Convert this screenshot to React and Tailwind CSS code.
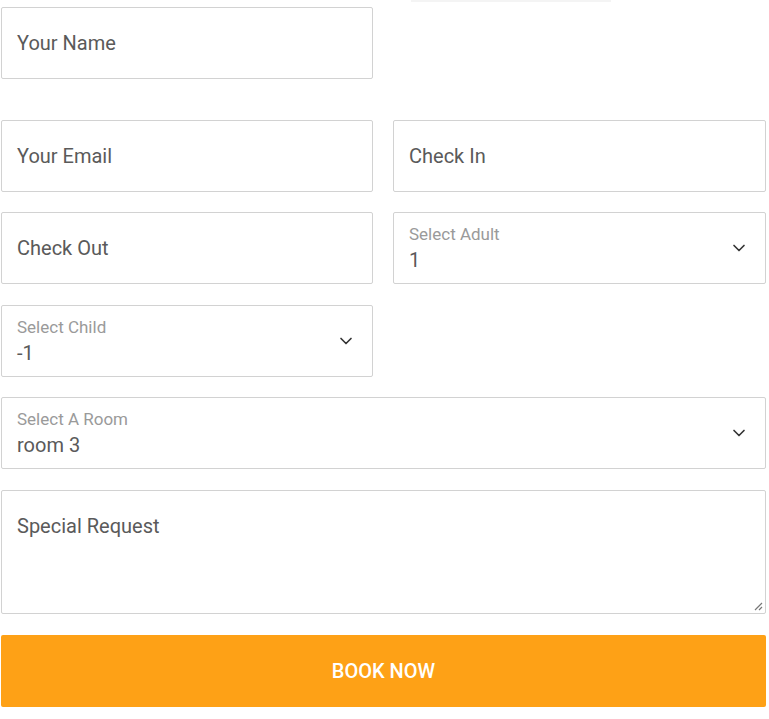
import { ChevronDown } from 'lucide-react';

const font = { fontFamily: 'Roboto, "Liberation Sans", sans-serif' };

const Field = ({ label, className = '' }) => (
  <div className={`h-[72px] border border-[#d2d2d2] rounded-[2px] bg-white flex items-center px-[15px] ${className}`}>
    <span className="text-[20px] text-[#5a5a5a]">{label}</span>
  </div>
);

const SelectField = ({ label, value, className = '' }) => (
  <div className={`h-[72px] border border-[#d2d2d2] rounded-[2px] bg-white flex items-center pl-[15px] pr-4 ${className}`}>
    <div className="flex-1 flex flex-col pt-1">
      <span className="text-[17px] leading-5 text-[#9a9a9a]">{label}</span>
      <span className="text-[20px] leading-8 text-[#5a5a5a]">{value}</span>
    </div>
    <ChevronDown size={20} strokeWidth={2} className="text-[#333]" />
  </div>
);

const Row = ({ className = '', children }) => (
  <div className={`grid grid-cols-[372px_373px] gap-x-5 ${className}`}>{children}</div>
);

const App = () => {
  return (
    <div className="min-h-screen bg-white" style={font}>
      <div className="w-[766px] pl-px">
        <div className="h-[7px] relative">
          <div className="absolute left-[410px] top-0 w-[200px] h-[2px] bg-[#f4f4f4]" />
        </div>
        <Row>
          <Field label="Your Name" />
          <div />
        </Row>
        <Row className="mt-[41px]">
          <Field label="Your Email" />
          <Field label="Check In" />
        </Row>
        <Row className="mt-5">
          <Field label="Check Out" />
          <SelectField label="Select Adult" value="1" />
        </Row>
        <Row className="mt-[21px]">
          <SelectField label="Select Child" value="-1" />
          <div />
        </Row>
        <SelectField label="Select A Room" value="room 3" className="mt-5" />
        <div className="mt-[21px] h-[124px] border border-[#d2d2d2] rounded-[2px] relative px-[15px] pt-[20px]">
          <span className="text-[20px] text-[#5a5a5a]">Special Request</span>
          <svg className="absolute right-[2px] bottom-[2px]" width="10" height="10" viewBox="0 0 10 10">
            <path d="M9 2 L2 9 M9 6 L6 9" stroke="#777" strokeWidth="1.2" />
          </svg>
        </div>
        <button className="mt-[21px] w-full h-[72px] bg-[#fea116] rounded-[2px] text-white text-[20px] font-medium">
          BOOK NOW
        </button>
      </div>
    </div>
  );
};

export default App;
